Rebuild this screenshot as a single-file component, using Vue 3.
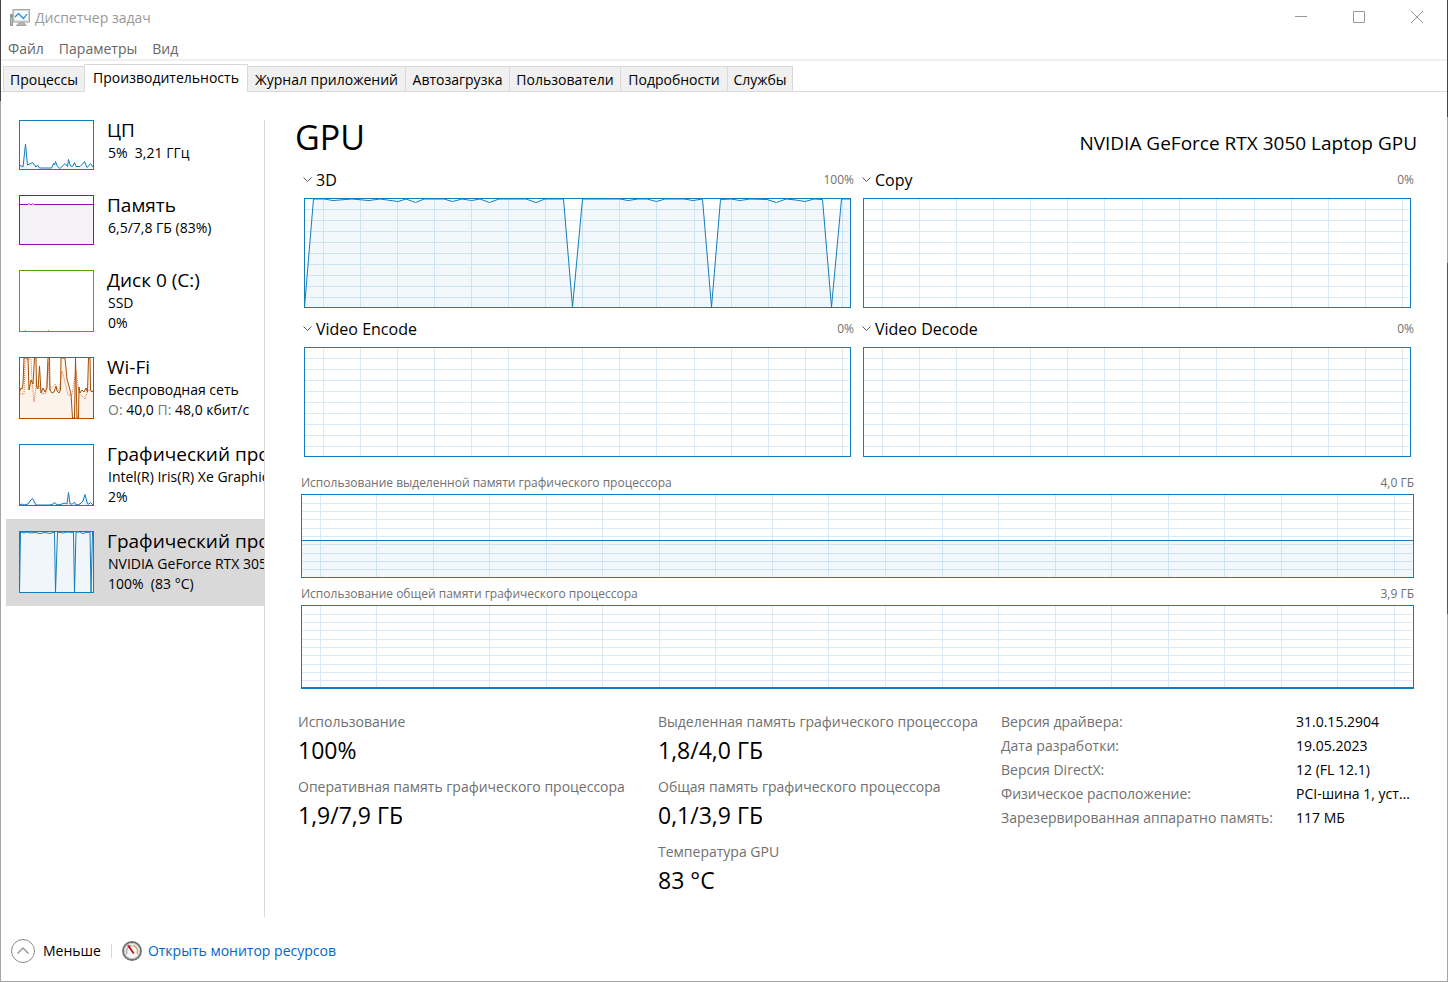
<script setup>
import { ref } from 'vue'

const menus = ['Файл', 'Параметры', 'Вид']
const tabs = ['Процессы', 'Производительность', 'Журнал приложений', 'Автозагрузка', 'Пользователи', 'Подробности', 'Службы']
const activeTab = ref(1)
const activeItem = ref(5)

const ripple = '0.5,109 9.5,1 20,1 29,2.5 48,1 65,2.5 76,1 94,3.5 102,1 111.5,4.5 120,1 140,1 148.5,3.5 158,1 167.5,2.5 176,1 185.5,4.5 195,1 222,1 232,4.5 241,1 259.5,1 268.5,109 278.5,1 316,1 324,2.5 334,1 343,1 352.5,3.5 361,1 380,1 389,2.5 398.5,1 407.5,109 416.5,1.5 427,1 436,2.5 446,1 463,1.5 472.5,4.5 482,1 492,2 501,3.5 510,1 518.5,1.5 527.5,109 537.5,1 546.5,1'

const items = [
  { title: 'ЦП', lines: ['5%  3,21 ГГц'], h: 50, tone: 'blue', points: '0.5,45 4,47 6.5,24 8.5,45 13.5,42.5 17,47 18.5,45 20.5,48 32.5,48 34.5,43.5 35.5,45 36.5,41.5 38.5,46.5 41,48.5 46,43.5 48.5,46.5 49.5,39.5 51.5,46 53.5,46.5 55.5,42.5 57,46.5 61,46.5 63.5,44 65.5,41.5 68,47.5 71.5,43.5 74,47' },
  { title: 'Память', lines: ['6,5/7,8 ГБ (83%)'], h: 50, tone: 'purple', points: '0.5,9.5 9,9.5 10,8.5 11,9.5 13,9.5 14,8.5 15,9.5 74.5,9.5' },
  { title: 'Диск 0 (C:)', lines: ['SSD', '0%'], h: 62, tone: 'green', points: '0.5,61.5 5.5,61.5 6.5,60.5 7.5,61.5 28.5,61.5 29.5,60.5 30.5,61.5 74.5,61.5' },
  { title: 'Wi-Fi', lines: ['Беспроводная сеть'], net: true, h: 62, tone: 'orange', points: '0.5,35 2,31 3,32 4,27 5,1 9,1 10,33 12,23 14,27 15.5,1 17,1 17.5,30 19,32 20.5,9 22,36 24,31 26,35 28,31 29,1 30.5,1 31,33 33,36 35,35 37,29 38,34 40,36 41.5,33 42,1 46,1 48,22 50,29 52,37 53.5,61 55.5,61 56.5,1 58,61 59.5,61 60,30 61,36 63,33 65,35 67,31 68.5,35 69.5,1 71,1 71.5,33 73,35 74.5,33', dotted: '1,37 5,37 6,5 8,2 12,2 13,24 15,45 17,31 20,28 23,37 27,36 29,5 31,33 36,27 40,34 43,14 46,25 49,38 53,38 57,14 60,36 66,42 69,33 74,35' },
  { title: 'Графический процессор 0', lines: ['Intel(R) Iris(R) Xe Graphics', '2%'], h: 62, tone: 'blue', points: '0.5,61 3,60 5,61 9,60 11,57 13.5,54.5 15,57 17,61 31,61 34,60 36,58.5 38,61 43,60 45,59 48,60 49.5,48.5 51,60 53.5,60 55.5,58 57,61 61,60 64,57 66,50.5 68.5,60 70,60 71.5,58.5 74,61' },
  { title: 'Графический процессор 1', lines: ['NVIDIA GeForce RTX 3050 Laptop GPU', '100%  (83 °C)'], h: 62, tone: 'blue', points: '0.5,61 1.5,1 5,2 8,1 11,2 16,1.5 21,2.5 26,1.5 31,2.5 35.5,1 36.5,61 38.5,1 44,2 48,1 54.5,1.5 55.5,61 57,1 61,1 64,2.5 67,1.5 71,1 72,61 73.5,1 74.5,1' },
]

const steps = (from, gap, count) => Array.from({ length: count }, (_, i) => Math.floor(from + gap * i) + 0.5)
const engineCols = steps(19, 37.1, 15)
const engineRows = steps(11, 11, 9)
const memoryCols = steps(19, 56.55, 20)
const memoryRows = [9, 17, 25, 34, 42, 50, 59, 67, 75].map((n) => n + 0.5)

const engines = [
  { name: '3D', value: '100%', points: ripple },
  { name: 'Copy', value: '0%' },
  { name: 'Video Encode', value: '0%' },
  { name: 'Video Decode', value: '0%' },
]
const memories = [
  { name: 'Использование выделенной памяти графического процессора', value: '4,0 ГБ', level: 46.5 },
  { name: 'Использование общей памяти графического процессора', value: '3,9 ГБ', level: 82.5 },
]
const statColumns = [
  [
    ['Использование', '100%'],
    ['Оперативная память графического процессора', '1,9/7,9 ГБ'],
  ],
  [
    ['Выделенная память графического процессора', '1,8/4,0 ГБ'],
    ['Общая память графического процессора', '0,1/3,9 ГБ'],
    ['Температура GPU', '83 °C'],
  ],
]
const details = [
  ['Версия драйвера:', '31.0.15.2904'],
  ['Дата разработки:', '19.05.2023'],
  ['Версия DirectX:', '12 (FL 12.1)'],
  ['Физическое расположение:', 'PCI-шина 1, устройство 0, функция 0'],
  ['Зарезервированная аппаратно память:', '117 МБ'],
]
</script>

<template>
  <div class="window">
    <header class="titlebar">
      <svg class="app-icon" width="20" height="18" viewBox="0 0 20 18" aria-hidden="true">
        <path d="M9 13h5l3 3.500H6z" fill="#b4b4b4" />
        <path d="M6 16.500h10" stroke="#a2a2a2" />
        <rect x="0.5" y="5.5" width="2" height="11" fill="#b9b9b9" stroke="#9c9c9c" />
        <rect x="1" y="6" width="2" height="2" fill="#2fc43c" />
        <rect x="3" y="0.5" width="16.5" height="12.5" fill="#d6d6d6" stroke="#a6a6a6" />
        <rect x="4.5" y="2" width="13.5" height="9.5" fill="#f4fbff" />
        <path d="M5 8l3.500-3.500 5 5 3.500-4.500" fill="none" stroke="#1e87c8" stroke-width="1.200" />
      </svg>
      <h1>Диспетчер задач</h1>
      <div class="controls">
        <button type="button" aria-label="Свернуть"><svg width="12" height="12" viewBox="0 0 12 12"><path d="M0 5.500h12" /></svg></button>
        <button type="button" aria-label="Развернуть"><svg width="12" height="12" viewBox="0 0 12 12"><path d="M.5.5h11v11H.5z" /></svg></button>
        <button type="button" aria-label="Закрыть"><svg width="12" height="12" viewBox="0 0 12 12"><path d="M0 0l12 12M12 0L0 12" /></svg></button>
      </div>
    </header>

    <nav class="menubar">
      <button v-for="m in menus" :key="m" type="button">{{ m }}</button>
    </nav>

    <div class="tabs" role="tablist">
      <button
        v-for="(t, i) in tabs"
        :key="t"
        type="button"
        role="tab"
        class="tab"
        :class="{ active: i === activeTab }"
        :aria-selected="i === activeTab"
        @click="activeTab = i"
      >{{ t }}</button>
    </div>

    <div class="body">
      <aside class="sidebar">
        <button
          v-for="(it, i) in items"
          :key="it.title"
          type="button"
          class="item"
          :class="{ selected: i === activeItem }"
          @click="activeItem = i"
        >
          <svg class="thumb" :class="it.tone" width="75" :height="it.h" :viewBox="`0 0 75 ${it.h}`" aria-hidden="true">
            <rect class="paper" width="75" :height="it.h" />
            <polygon class="area" :points="`0.5,${it.h} ${it.points} 74.5,${it.h}`" />
            <polyline v-if="it.dotted" class="dotted" :points="it.dotted" />
            <polyline class="line" :points="it.points" />
            <rect class="frame" x="0.5" y="0.5" width="74" :height="it.h - 1" />
          </svg>
          <span class="item-text">
            <span class="item-title">{{ it.title }}</span>
            <span v-for="l in it.lines" :key="l" class="item-line">{{ l }}</span>
            <span v-if="it.net" class="item-line"><i>О:</i> 40,0 <i>П:</i> 48,0 кбит/с</span>
          </span>
        </button>
      </aside>

      <main class="main">
        <div class="heading">
          <h2>GPU</h2>
          <p>NVIDIA GeForce RTX 3050 Laptop GPU</p>
        </div>

        <div class="engines">
          <section v-for="e in engines" :key="e.name" class="engine">
            <div class="engine-head">
              <button type="button" aria-haspopup="listbox">
                <svg width="9" height="6" viewBox="0 0 9 6" aria-hidden="true"><path d="M.5.5l4 4 4-4" /></svg>
                {{ e.name }}
              </button>
              <span>{{ e.value }}</span>
            </div>
            <svg class="chart" viewBox="0 0 547 110" preserveAspectRatio="none" aria-hidden="true">
              <g class="grid">
                <path v-for="x in engineCols" :key="'c' + x" :d="`M${x} 0V110`" />
                <path v-for="y in engineRows" :key="'r' + y" :d="`M0 ${y}H545`" />
              </g>
              <template v-if="e.points">
                <polygon class="area" :points="`${e.points} 546.5,109`" />
                <polyline class="line" :points="e.points" />
              </template>
            </svg>
          </section>
        </div>

        <section v-for="m in memories" :key="m.name" class="memory">
          <div class="memory-head"><span>{{ m.name }}</span><span>{{ m.value }}</span></div>
          <svg class="chart" viewBox="0 0 1113 84" preserveAspectRatio="none" aria-hidden="true">
            <g class="grid">
              <path v-for="x in memoryCols" :key="'c' + x" :d="`M${x} 0V84`" />
              <path v-for="y in memoryRows" :key="'r' + y" :d="`M0 ${y}H1111`" />
            </g>
            <rect class="area" x="0" :y="m.level" width="1113" :height="84 - m.level" />
            <path class="line" :d="`M0 ${m.level}H1113`" />
          </svg>
        </section>

        <div class="stats">
          <dl v-for="(col, i) in statColumns" :key="i" class="stat-col">
            <div v-for="s in col" :key="s[0]">
              <dt>{{ s[0] }}</dt>
              <dd>{{ s[1] }}</dd>
            </div>
          </dl>
          <table class="details">
            <tbody>
              <tr v-for="d in details" :key="d[0]">
                <th scope="row">{{ d[0] }}</th>
                <td>{{ d[1] }}</td>
              </tr>
            </tbody>
          </table>
        </div>
      </main>
    </div>

    <footer class="footer">
      <button type="button" class="less">
        <svg width="24" height="24" viewBox="0 0 24 24" aria-hidden="true">
          <circle cx="12" cy="12" r="11.500" fill="none" stroke="#8a8a8a" />
          <path d="M6.500 14.500l5.500-5.500 5.500 5.500" fill="none" stroke="#9a9a9a" stroke-width="1.500" />
        </svg>
        Меньше
      </button>
      <a href="#resmon" class="resmon">
        <svg width="20" height="20" viewBox="0 0 20 20" aria-hidden="true">
          <circle cx="10" cy="10" r="9" fill="#e9e9e7" stroke="#6f6f6f" stroke-width="1.800" />
          <circle cx="10" cy="10" r="7.500" fill="#f7f7f5" stroke="#c9c9c9" />
          <path d="M5 13a6 6 0 0 1 5-8.500" fill="none" stroke="#a9b4ab" stroke-width="1.500" />
          <path d="M11 4.500a6 6 0 0 1 4 8.500" fill="none" stroke="#e0a070" stroke-width="1.500" />
          <path d="M5 4.500l2-.5 5.500 8-1.500 1z" fill="#c4161c" />
        </svg>
        Открыть монитор ресурсов
      </a>
    </footer>
  </div>
</template>

<style>
body {
  margin: 0;
  background: #fff;
}
</style>

<style scoped>
.window {
  box-sizing: border-box;
  min-height: 100vh;
  display: flex;
  flex-direction: column;
  padding: 0 1px;
  border-bottom: 1px solid #a0a0a0;
  background:
    linear-gradient(#444 101px, #a6a6a6 101px) left / 1px 100% no-repeat,
    linear-gradient(#444 117px, #a6a6a6 117px 263px, #555 263px 614px, #a6a6a6 614px) right / 1px 100% no-repeat,
    #fff;
  color: #000;
  font: 14px/20px "Open Sans", "Noto Sans", sans-serif;
}
button {
  font: inherit;
  color: inherit;
  background: none;
  border: 0;
  padding: 0;
  text-align: left;
}
h1, h2, p, dl, dd {
  margin: 0;
  font-weight: 400;
}
.titlebar {
  display: flex;
  align-items: center;
  height: 36px;
  padding: 0 1px 0 9px;
  gap: 5px;
}
.titlebar h1 {
  flex: 1;
  font-size: 14px;
  color: #999;
}
.controls {
  display: flex;
  align-self: flex-start;
}
.controls button {
  display: flex;
  align-items: center;
  justify-content: center;
  width: 58px;
  height: 34px;
}
.controls svg {
  fill: none;
  stroke: #999;
}
.menubar {
  display: flex;
  gap: 15px;
  height: 23px;
  padding-left: 7px;
  border-bottom: 2px solid #f0f0f0;
  color: #666;
}
.menubar button {
  height: 25px;
}
.tabs {
  display: grid;
  grid-template-columns: 81px 163px 158px 104px 111px 107px 65px 1fr;
  align-items: end;
  height: 31px;
  padding-left: 2px;
  background: linear-gradient(#d9d9d9, #d9d9d9) bottom / 100% 1px no-repeat;
}
.tab {
  height: 26px;
  margin-right: -1px;
  padding-top: 2px;
  border: 1px solid #d9d9d9;
  background: #f0f0f0;
  text-align: center;
  white-space: nowrap;
}
.tab.active {
  position: relative;
  height: 28px;
  padding: 0 0 2px;
  border-bottom: 0;
  background: #fff;
}
.body {
  flex: 1;
  display: flex;
  padding-top: 16px;
}
.sidebar {
  width: 258px;
  flex: none;
  padding-left: 5px;
  margin-bottom: 4px;
  background: linear-gradient(#d9d9d9, #d9d9d9) right 12px / 1px 100% no-repeat;
  padding-right: 1px;
}
.item {
  display: flex;
  width: 100%;
  gap: 13px;
  padding: 12px 0 13px 13px;
  overflow: hidden;
}
.item.selected {
  background: #d9d9d9;
}
.thumb {
  flex: none;
}
.item-text {
  display: flex;
  flex-direction: column;
  height: 50px;
  white-space: pre;
  line-height: 20px;
}
.item-title {
  font-size: 19px;
  margin-bottom: 3px;
}
.item-line {
  padding-left: 1px;
}
.item-line i {
  font-style: normal;
  color: #777;
}
.blue { --stroke: #117dbb; --fill: #f1f6fa; }
.purple { --stroke: #8b12ae; --fill: #f4f2f7; }
.green { --stroke: #4da60c; --fill: #eff7e9; }
.orange { --stroke: #a74f01; --fill: #fcf3eb; }
.thumb .paper { fill: #fff; }
.thumb .area { fill: var(--fill); }
.thumb .line, .thumb .frame { fill: none; stroke: var(--stroke); }
.thumb .dotted { fill: none; stroke: #e0703a; stroke-dasharray: 1 1; }

.main {
  flex: 1;
  min-width: 0;
  padding: 7px 33px 0 36px;
}
.heading {
  display: flex;
  justify-content: space-between;
  align-items: baseline;
  height: 49px;
  margin: 0 -3px 0 -6px;
}
.heading h2 {
  font-size: 34px;
  line-height: 44px;
}
.heading p {
  font-size: 19px;
}
.engines {
  display: grid;
  grid-template-columns: 547fr 548fr;
  gap: 5px 12px;
  padding: 0 3px;
}
.engine {
  min-width: 0;
}
.engine-head {
  display: flex;
  justify-content: space-between;
  align-items: center;
  height: 31px;
  margin: 0 -3px 3px -1px;
}
.engine-head button {
  display: flex;
  align-items: center;
  gap: 4px;
  font-size: 16px;
}
.engine-head button svg {
  fill: none;
  stroke: #555;
}
.engine-head span, .memory-head {
  font-size: 12px;
  color: #707070;
}
.chart {
  display: block;
  box-sizing: border-box;
  width: 100%;
  outline: 1px solid #117dbb;
  outline-offset: -1px;
}
.engine .chart { height: 110px; }
.memory .chart { height: 84px; }
.chart path, .chart polyline { vector-effect: non-scaling-stroke; }
.chart .grid { stroke: #d9eaf4; shape-rendering: crispEdges; }
.chart .area { fill: rgba(17, 125, 187, 0.06); }
.chart .line { fill: none; stroke: #117dbb; }
.memory-head {
  display: flex;
  justify-content: space-between;
  line-height: 23px;
  padding-top: 4px;
}
.engines + .memory {
  padding-top: 10px;
}
.stats {
  display: grid;
  grid-template-columns: 360fr 343fr 413fr;
  margin: 23px 0 0 -3px;
}
.stat-col > div {
  height: 65px;
  white-space: nowrap;
}
dt, th {
  color: #707070;
}
dd {
  font-size: 23px;
  line-height: 36px;
}
.details {
  width: 100%;
  table-layout: fixed;
  border-collapse: collapse;
  margin-top: -2px;
  align-self: start;
}
.details th, .details td {
  height: 24px;
  padding: 0;
  font-weight: 400;
  text-align: left;
  white-space: nowrap;
}
.details th {
  width: 295px;
}
.details td {
  overflow: hidden;
  text-overflow: ellipsis;
}
.footer {
  display: flex;
  align-items: center;
  height: 60px;
  padding-left: 10px;
}
.less, .resmon {
  display: flex;
  align-items: center;
  gap: 8px;
}
.less {
  padding-right: 10px;
}
.resmon {
  gap: 6px;
  padding-left: 11px;
  color: #0066cc;
  text-decoration: none;
  background: linear-gradient(#d9d9d9, #d9d9d9) left / 1px 14px no-repeat;
}
</style>
